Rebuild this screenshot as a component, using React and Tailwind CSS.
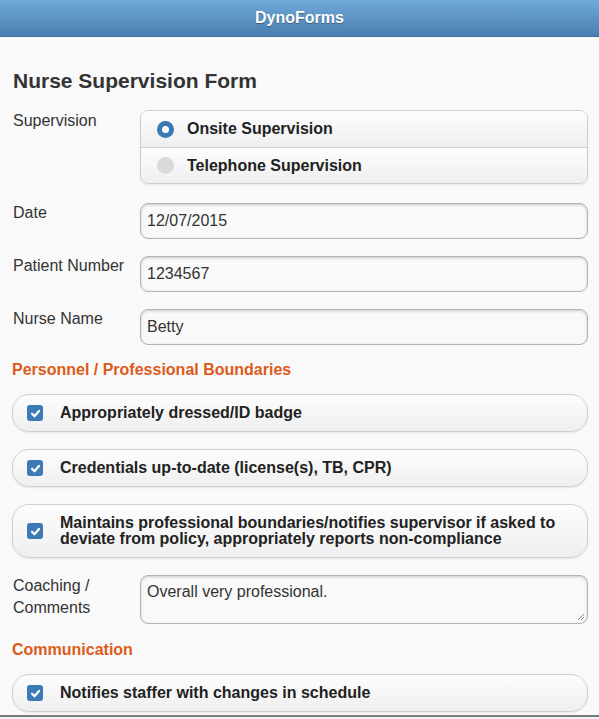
import React from "react";

const font = { fontFamily: '"Liberation Sans", Arial, Helvetica, sans-serif' };

function Label({ children, className = "" }) {
  return (
    <div className={`w-[128px] shrink-0 pl-px pr-2 text-[16px] leading-5 text-[#333] ${className}`}>
      {children}
    </div>
  );
}

function TextInput({ value }) {
  return (
    <div className="flex-1 h-[36px] rounded-[8px] border border-[#b4b4b4] bg-[#f9f9f9] px-[6px] flex items-center text-[16px] text-[#333] shadow-[inset_0_1px_3px_rgba(0,0,0,0.2)]">
      {value}
    </div>
  );
}

function Check() {
  return (
    <span className="w-[16px] h-[16px] shrink-0 rounded-[3px] bg-[#3d7ab5] flex items-center justify-center">
      <svg width="11" height="11" viewBox="0 0 12 12">
        <path d="M2.2 6.3 L4.9 9 L9.8 3.2" fill="none" stroke="white" strokeWidth="2.4" strokeLinecap="round" strokeLinejoin="round" />
      </svg>
    </span>
  );
}

function CheckRow({ children }) {
  return (
    <div className="flex items-center gap-[17px] rounded-[17px] border border-[#cfcfcf] bg-gradient-to-b from-[#fdfdfd] to-[#efefef] pl-[14px] pr-4 py-[10px] min-h-[37px] shadow-[0_1px_2px_rgba(0,0,0,0.08)]">
      <Check />
      <span className="text-[16px] leading-4 font-bold text-[#222]">{children}</span>
    </div>
  );
}

function Section({ children }) {
  return <div className="text-[16px] leading-5 font-bold text-[#dc5b1a]">{children}</div>;
}

export default function App() {
  return (
    <div style={font} className="min-h-[719px] bg-[#f9f9f9] flex flex-col">
      <div className="h-[37px] shrink-0 bg-gradient-to-b from-[#70abda] to-[#4a7db0] border-b border-[#456f9a] flex items-center justify-center">
        <span className="text-white font-bold text-[16px] [text-shadow:0_1px_1px_rgba(0,0,0,0.35)]">DynoForms</span>
      </div>

      <div className="px-[12px] pr-[11px] pt-[32px] flex flex-col">
        <h1 className="pl-px text-[21px] leading-6 font-bold text-[#333]">Nurse Supervision Form</h1>

        <div className="flex mt-[17px]">
          <Label className="pt-px pl-[3px]">Supervision</Label>
          <div className="flex-1 rounded-[8px] border border-[#cfcfcf] overflow-hidden shadow-[0_1px_2px_rgba(0,0,0,0.08)]">
            <div className="h-[37px] flex items-center gap-[13px] pl-[16px] bg-gradient-to-b from-[#fdfdfd] to-[#efefef] border-b border-[#d2d2d2]">
              <span className="w-[17px] h-[17px] rounded-full bg-[#3a79b3] flex items-center justify-center">
                <span className="w-[7px] h-[7px] rounded-full bg-white" />
              </span>
              <span className="text-[16px] font-bold text-[#222]">Onsite Supervision</span>
            </div>
            <div className="h-[35px] flex items-center gap-[13px] pl-[16px] bg-gradient-to-b from-[#fdfdfd] to-[#efefef]">
              <span className="w-[17px] h-[17px] rounded-full bg-[#dadada]" />
              <span className="text-[16px] font-bold text-[#222]">Telephone Supervision</span>
            </div>
          </div>
        </div>

        <div className="flex mt-[19px]">
          <Label>Date</Label>
          <TextInput value="12/07/2015" />
        </div>
        <div className="flex mt-[17px]">
          <Label>Patient Number</Label>
          <TextInput value="1234567" />
        </div>
        <div className="flex mt-[17px]">
          <Label>Nurse Name</Label>
          <TextInput value="Betty" />
        </div>

        <div className="mt-[15px]">
          <Section>Personnel / Professional Boundaries</Section>
        </div>

        <div className="mt-[14px] flex flex-col gap-[17px]">
          <CheckRow>Appropriately dressed/ID badge</CheckRow>
          <CheckRow>Credentials up-to-date (license(s), TB, CPR)</CheckRow>
          <CheckRow>
            Maintains professional boundaries/notifies supervisor if asked to deviate from policy, appropriately reports non-compliance
          </CheckRow>
        </div>

        <div className="flex mt-[17px]">
          <Label className="leading-[22px] pr-6">Coaching / Comments</Label>
          <div className="relative flex-1 h-[49px] rounded-[8px] border border-[#b4b4b4] bg-[#f9f9f9] px-[6px] pt-[6px] text-[16px] leading-5 text-[#333] shadow-[inset_0_1px_3px_rgba(0,0,0,0.2)]">
            Overall very professional.
            <svg className="absolute right-[2px] bottom-[2px]" width="8" height="8" viewBox="0 0 8 8">
              <path d="M1 7 L7 1 M4 7 L7 4" stroke="#888" strokeWidth="1" />
            </svg>
          </div>
        </div>

        <div className="mt-[16px]">
          <Section>Communication</Section>
        </div>

        <div className="mt-[14px]">
          <CheckRow>Notifies staffer with changes in schedule</CheckRow>
        </div>
      </div>

      <div className="mt-[3px] border-t-2 border-[#7a7a7a] h-10 bg-[#f0f0f0]" />
    </div>
  );
}
